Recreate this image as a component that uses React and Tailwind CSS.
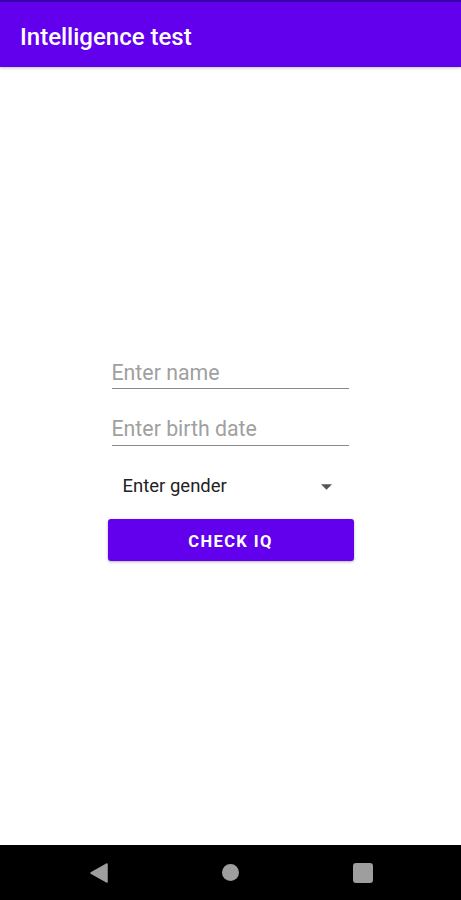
export default function App() {
  return (
    <div className="flex h-[900px] w-[461px] flex-col bg-white font-['Roboto',sans-serif]">
      <div className="h-[2px] bg-[#3a00b0]" />
      <header className="flex h-[65px] items-center bg-[#6200ee] px-5 pt-[4px] shadow-[0_1px_3px_rgba(0,0,0,0.25)]">
        <h1 className="text-[24px] font-medium text-white">Intelligence test</h1>
      </header>

      <main className="flex flex-1 flex-col items-center pt-[290px]">
        <div className="flex w-[246px] flex-col">
          <div className="ml-[4px] mr-[5px] flex h-[32px] items-end border-b-[1.5px] border-[#8a8a8a] pb-[5px]">
            <span className="text-[21.3px] leading-none text-[#a0a0a0]">Enter name</span>
          </div>
          <div className="ml-[4px] mr-[5px] mt-[24px] flex h-[33px] items-end border-b-[1.5px] border-[#8a8a8a] pb-[6px]">
            <span className="text-[21.3px] leading-none text-[#a0a0a0]">Enter birth date</span>
          </div>
          <div className="mt-[27px] flex h-[28px] items-center justify-between pl-[15px] pr-[22px]">
            <span className="text-[18.5px] text-[#222]">Enter gender</span>
            <svg width="11" height="6" viewBox="0 0 10 5">
              <path d="M0 0h10L5 5z" fill="#555" />
            </svg>
          </div>
          <button className="mt-[18px] h-[42px] rounded-[3px] bg-[#6200ee] pt-[4px] text-[16.5px] font-bold tracking-[1.4px] text-white shadow-[0_1px_3px_rgba(0,0,0,0.3)]">
            CHECK IQ
          </button>
        </div>
      </main>

      <nav className="flex h-[55px] items-center justify-center gap-[114px] bg-black pl-[2px]">
        <svg width="18" height="20" viewBox="0 0 18 20">
          <path d="M17 1v18L1 10z" fill="#9e9e9e" stroke="#9e9e9e" strokeLinejoin="round" strokeWidth="1.5" />
        </svg>
        <div className="h-[17px] w-[17px] rounded-full bg-[#9e9e9e]" />
        <div className="h-[20px] w-[20px] rounded-[3px] bg-[#9e9e9e]" />
      </nav>
    </div>
  );
}
